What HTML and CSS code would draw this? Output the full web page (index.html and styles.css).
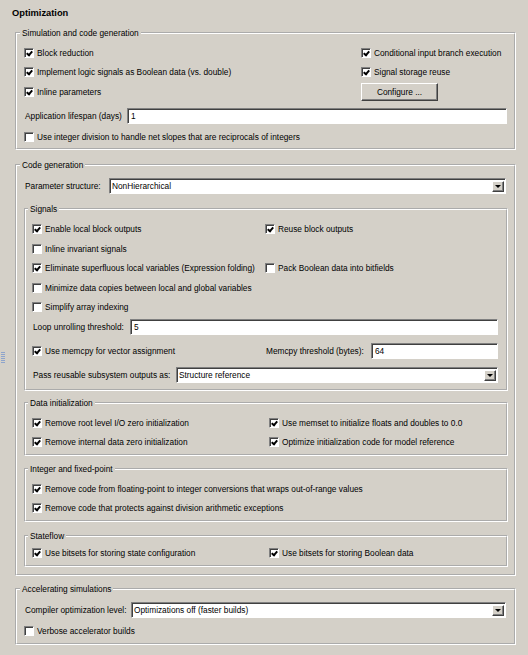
FILE: index.html
```html
<!DOCTYPE html>
<html>
<head>
<meta charset="utf-8">
<link rel="stylesheet" href="styles.css">
</head>
<body>
<div class="page">
  <div class="grip"></div>
  <div class="title">Optimization</div>

  <fieldset class="grp sim">
    <legend>Simulation and code generation</legend>
    <div class="row">
      <div class="cell"><label class="cb"><span class="box on"></span>Block reduction</label></div>
      <label class="cb"><span class="box on"></span>Conditional input branch execution</label>
    </div>
    <div class="row">
      <div class="cell"><label class="cb"><span class="box on"></span>Implement logic signals as Boolean data (vs. double)</label></div>
      <label class="cb"><span class="box on"></span>Signal storage reuse</label>
    </div>
    <div class="row row-btn">
      <div class="cell"><label class="cb"><span class="box on"></span>Inline parameters</label></div>
      <div class="btn">Configure ...</div>
    </div>
    <div class="row row-field">
      <span class="lbl lbl-life">Application lifespan (days)</span>
      <div class="field">1</div>
    </div>
    <div class="row row-after">
      <label class="cb"><span class="box"></span>Use integer division to handle net slopes that are reciprocals of integers</label>
    </div>
  </fieldset>

  <fieldset class="grp codegen">
    <legend>Code generation</legend>
    <div class="row row-field row-param">
      <span class="lbl lbl-param">Parameter structure:</span>
      <div class="field select"><span class="val">NonHierarchical</span><span class="arrow"></span></div>
    </div>

    <fieldset class="grp sub signals">
      <legend>Signals</legend>
      <div class="row srow">
        <div class="cell c-sig"><label class="cb"><span class="box on"></span>Enable local block outputs</label></div>
        <label class="cb"><span class="box on"></span>Reuse block outputs</label>
      </div>
      <div class="row srow">
        <label class="cb"><span class="box"></span>Inline invariant signals</label>
      </div>
      <div class="row srow">
        <div class="cell c-sig"><label class="cb"><span class="box on"></span>Eliminate superfluous local variables (Expression folding)</label></div>
        <label class="cb"><span class="box"></span>Pack Boolean data into bitfields</label>
      </div>
      <div class="row srow">
        <label class="cb"><span class="box"></span>Minimize data copies between local and global variables</label>
      </div>
      <div class="row srow">
        <label class="cb"><span class="box"></span>Simplify array indexing</label>
      </div>
      <div class="row row-field row-loop">
        <span class="lbl lbl-loop">Loop unrolling threshold:</span>
        <div class="field">5</div>
      </div>
      <div class="row row-field">
        <div class="cell c-mem"><label class="cb"><span class="box on"></span>Use memcpy for vector assignment</label></div>
        <span class="lbl lbl-memt">Memcpy threshold (bytes):</span>
        <div class="field">64</div>
      </div>
      <div class="row row-field">
        <span class="lbl lbl-pass">Pass reusable subsystem outputs as:</span>
        <div class="field select"><span class="val">Structure reference</span><span class="arrow"></span></div>
      </div>
    </fieldset>

    <fieldset class="grp sub datainit">
      <legend>Data initialization</legend>
      <div class="row">
        <div class="cell c-init"><label class="cb"><span class="box on"></span>Remove root level I/O zero initialization</label></div>
        <label class="cb"><span class="box on"></span>Use memset to initialize floats and doubles to 0.0</label>
      </div>
      <div class="row">
        <div class="cell c-init"><label class="cb"><span class="box on"></span>Remove internal data zero initialization</label></div>
        <label class="cb"><span class="box on"></span>Optimize initialization code for model reference</label>
      </div>
    </fieldset>

    <fieldset class="grp sub intfp">
      <legend>Integer and fixed-point</legend>
      <div class="row">
        <label class="cb"><span class="box on"></span>Remove code from floating-point to integer conversions that wraps out-of-range values</label>
      </div>
      <div class="row">
        <label class="cb"><span class="box on"></span>Remove code that protects against division arithmetic exceptions</label>
      </div>
    </fieldset>

    <fieldset class="grp sub stateflow">
      <legend>Stateflow</legend>
      <div class="row">
        <div class="cell c-init"><label class="cb"><span class="box on"></span>Use bitsets for storing state configuration</label></div>
        <label class="cb"><span class="box on"></span>Use bitsets for storing Boolean data</label>
      </div>
    </fieldset>
  </fieldset>

  <fieldset class="grp accel">
    <legend>Accelerating simulations</legend>
    <div class="row row-field row-param">
      <span class="lbl lbl-comp">Compiler optimization level:</span>
      <div class="field select"><span class="val">Optimizations off (faster builds)</span><span class="arrow"></span></div>
    </div>
    <div class="row row-verbose">
      <label class="cb"><span class="box"></span>Verbose accelerator builds</label>
    </div>
  </fieldset>
</div>
</body>
</html>
```

FILE: styles.css
```css
* { box-sizing: border-box; }

body {
  margin: 0;
  background: #d4d0c8;
  font-family: "Liberation Sans", Arial, sans-serif;
  font-size: 8.3px;
  color: #000;
}

.page {
  position: relative;
  height: 655px;
  padding: 6px 12px 0 15px;
}

.grip {
  position: absolute;
  left: 1px;
  top: 352px;
  width: 4px;
  height: 12px;
  background: repeating-linear-gradient(to bottom, #8ea4cc 0 1px, transparent 1px 2px);
}

.title {
  font-weight: bold;
  font-size: 9.3px;
  line-height: 14px;
  height: 14px;
  margin-left: -3px;
  margin-bottom: 7px;
}

.grp {
  margin: 0;
  min-width: 0;
  border: 2px groove #ffffff;
  padding: 0 7px 2px 7px;
}

.grp > legend {
  padding: 0 2px;
  margin-left: -4px;
  height: 12px;
  line-height: 12px;
}

.row {
  display: flex;
  align-items: center;
  height: 19px;
  white-space: nowrap;
}

.cell {
  flex: none;
  display: flex;
  align-items: center;
}

.cb {
  display: flex;
  align-items: center;
  gap: 3px;
}

.box {
  flex: none;
  position: relative;
  width: 10px;
  height: 10px;
  background: #fff;
  border: 1px solid;
  border-color: #808080 #ffffff #ffffff #808080;
  box-shadow: inset 1px 1px 0 #404040;
}

.box.on::after {
  content: "";
  position: absolute;
  left: 2px;
  top: 1px;
  width: 2px;
  height: 4px;
  border: solid #000;
  border-width: 0 2px 2px 0;
  transform: translate(0.5px, 0) rotate(40deg);
  transform-origin: center;
}

.lbl {
  flex: none;
  padding-left: 1px;
}

.field {
  flex: 1;
  height: 16px;
  background: #fff;
  border: 1px solid;
  border-color: #808080 #ffffff #ffffff #808080;
  box-shadow: inset 1px 1px 0 #404040;
  padding: 0 3px;
  line-height: 14px;
  display: flex;
  align-items: center;
}

.field.select { padding: 0 1px 0 2px; }

.val { flex: 1; }

.arrow {
  flex: none;
  width: 12px;
  height: 11px;
  margin-top: 1px;
  background: #d4d0c8;
  border: 1px solid;
  border-color: #ffffff #404040 #404040 #ffffff;
  box-shadow: inset -1px -1px 0 #808080;
  display: flex;
  align-items: center;
  justify-content: center;
}

.arrow::after {
  content: "";
  width: 0;
  height: 0;
  border-left: 3px solid transparent;
  border-right: 3px solid transparent;
  border-top: 3px solid #000;
  margin-left: -1px;
}

.btn {
  width: 77px;
  height: 18px;
  border: 1px solid;
  border-color: #ffffff #404040 #404040 #ffffff;
  box-shadow: inset -1px -1px 0 #808080;
  display: flex;
  align-items: center;
  justify-content: center;
  padding-bottom: 1px;
}

/* Simulation group */
.grp.sim { padding: 4px 7px 2px 7px; }
.sim .cell { width: 337px; }
.sim .row-btn { height: 20px; margin-top: 1px; }
.row-field { height: 20px; margin-top: 4px; }
.sim .row-after { margin-top: 1px; }
.lbl-life { width: 103px; }

/* Code generation */
.grp.codegen {
  margin-top: 9px;
  padding: 5px 6px 7px 7px;
}
.row.row-param { margin-top: 0; }
.lbl-param { width: 85px; }
.codegen > .row-param .field { margin-right: 2px; }

.grp.sub { padding-left: 6px; padding-right: 8px; }

.grp.signals { margin-top: 7px; padding-top: 4.5px; padding-bottom: 4px; }
.signals .srow { height: 19.5px; }
.row.row-loop { margin-top: 0; }
.c-sig { width: 233px; }
.c-mem { width: 234px; }
.lbl-loop { width: 98px; }
.lbl.lbl-memt { width: 105px; padding-left: 0; }
.lbl-pass { width: 144px; }

.grp.datainit { margin-top: 6px; padding-top: 4.5px; padding-bottom: 2px; }
.c-init { width: 237px; }

.grp.intfp { margin-top: 7.5px; padding-top: 4.5px; padding-bottom: 2.5px; }

.grp.stateflow { margin-top: 8px; padding-top: 1.5px; padding-bottom: 2.5px; }

/* Accelerating */
.grp.accel { margin-top: 7px; padding: 5px 8px 2.5px 7px; }
.lbl-comp { width: 107px; }
.row-verbose { margin-top: 1.5px; }
```
